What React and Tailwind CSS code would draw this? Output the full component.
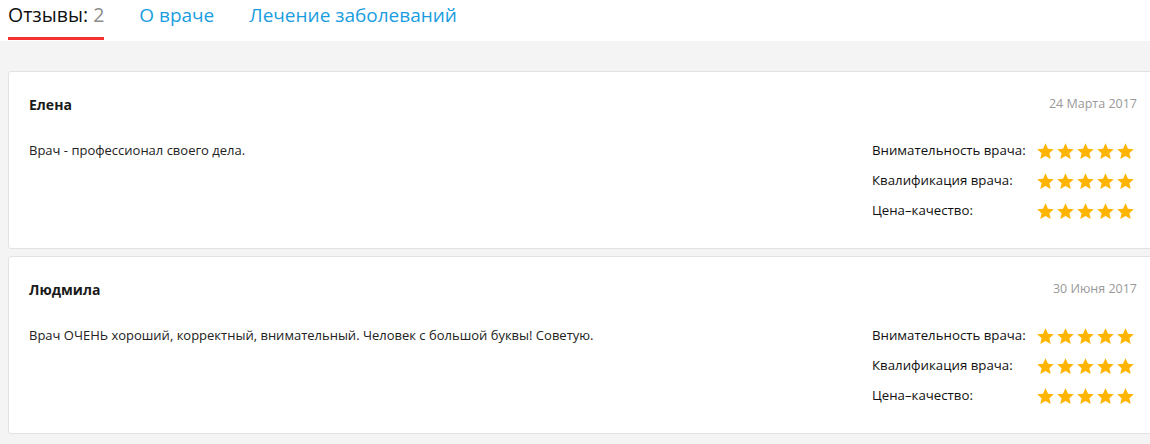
import React from 'react';

const reviews = [
  {
    name: 'Елена',
    date: '24 Марта 2017',
    text: 'Врач - профессионал своего дела.',
  },
  {
    name: 'Людмила',
    date: '30 Июня 2017',
    text: 'Врач ОЧЕНЬ хороший, корректный, внимательный. Человек с большой буквы! Советую.',
  },
];

const criteria = ['Внимательность врача:', 'Квалификация врача:', 'Цена–качество:'];

function Star() {
  return (
    <svg viewBox="0 0 24 24" className="h-[19px] w-[19px]" fill="#ffb400">
      <path d="M12 1.5l3.1 6.9 7.4.7-5.6 5 1.7 7.4L12 17.6l-6.6 3.9 1.7-7.4-5.6-5 7.4-.7z" />
    </svg>
  );
}

function ReviewCard({ review }) {
  return (
    <div className="w-[1150px] rounded-[3px] border border-[#e2e2e2] bg-white pt-[22px] pb-[22px] pl-[20px] pr-[20px]">
      <div className="flex h-5 items-center justify-between">
        <span className="text-[14px] font-bold text-[#1a1a1a]">{review.name}</span>
        <span className="text-[12.5px] text-[#999]">{review.date}</span>
      </div>
      <div className="mt-[22px] flex justify-between">
        <p className="flex h-[30px] items-center text-[13px] text-[#222]">{review.text}</p>
        <div className="flex flex-col pr-[2px]">
          {criteria.map((c) => (
            <div key={c} className="flex h-[30px] items-center">
              <span className="w-[164px] text-[13.25px] text-[#111]">{c}</span>
              <div className="flex gap-px">
                {[0, 1, 2, 3, 4].map((i) => (
                  <Star key={i} />
                ))}
              </div>
            </div>
          ))}
        </div>
      </div>
    </div>
  );
}

export default function App() {
  return (
    <div className="h-[444px] w-[1150px] overflow-hidden bg-[#f4f4f4] font-['Open_Sans',sans-serif]">
      {/* Tabs */}
      <div className="flex h-[41px] items-start gap-[35px] bg-white pl-2">
        <div className="flex h-[41px] flex-col">
          <span className="pt-[2px] text-[19.5px] leading-[26px] text-[#111]">
            Отзывы: <span className="text-[#8c8c8c]">2</span>
          </span>
          <div className="mt-auto mb-[1px] h-[3px] bg-[#f43030]" />
        </div>
        <span className="pt-[2px] text-[19px] leading-[26px] text-[#1a9de0]">О враче</span>
        <span className="pt-[2px] text-[19px] leading-[26px] text-[#1a9de0]">Лечение заболеваний</span>
      </div>

      {/* Reviews */}
      <div className="flex flex-col gap-[7px] pt-[30px] pl-2">
        {reviews.map((r) => (
          <ReviewCard key={r.name} review={r} />
        ))}
      </div>
    </div>
  );
}
